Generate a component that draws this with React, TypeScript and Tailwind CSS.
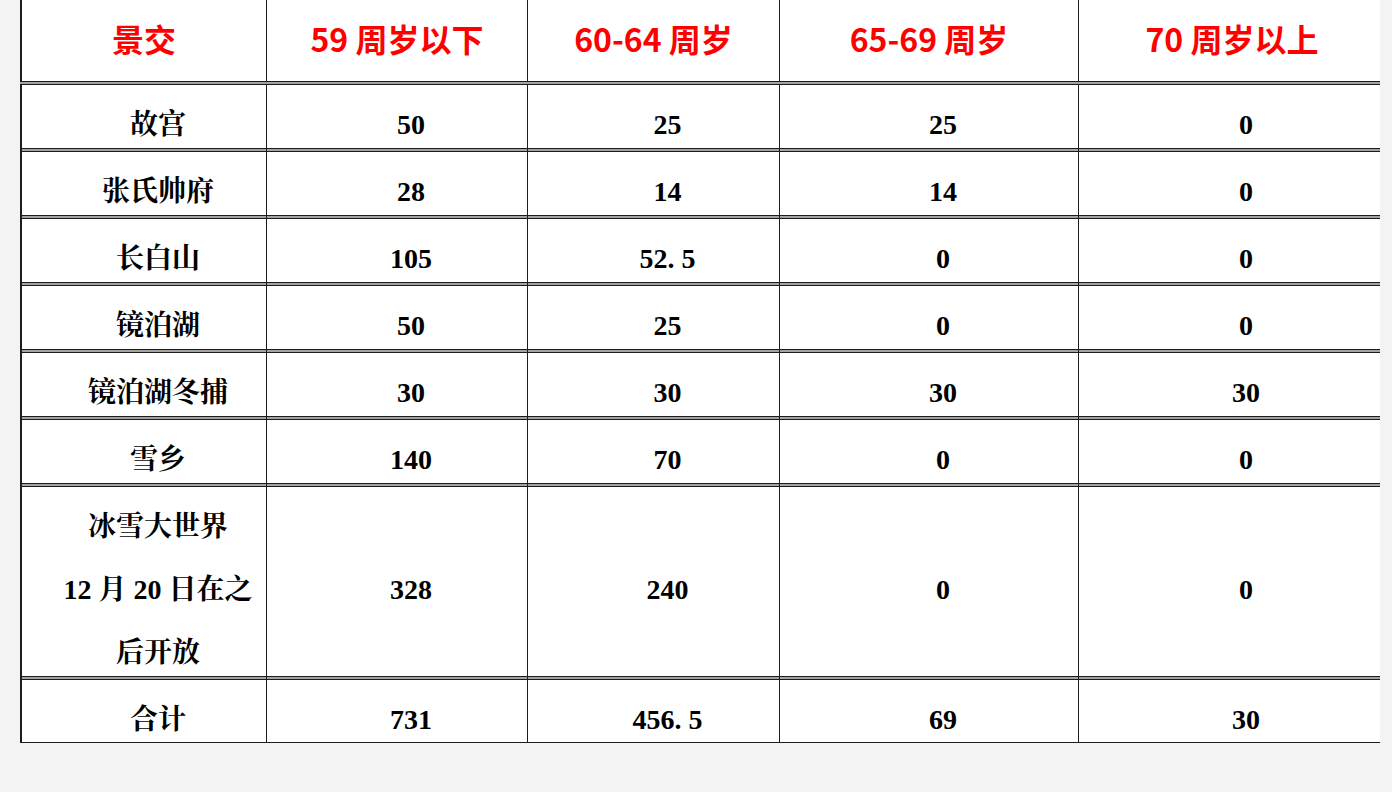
const header = ["景交", "59 周岁以下", "60-64 周岁", "65-69 周岁", "70 周岁以上"];

const rows: { name: string[]; values: string[]; tall?: boolean; last?: boolean }[] = [
  { name: ["故宫"], values: ["50", "25", "25", "0"] },
  { name: ["张氏帅府"], values: ["28", "14", "14", "0"] },
  { name: ["长白山"], values: ["105", "52. 5", "0", "0"] },
  { name: ["镜泊湖"], values: ["50", "25", "0", "0"] },
  { name: ["镜泊湖冬捕"], values: ["30", "30", "30", "30"] },
  { name: ["雪乡"], values: ["140", "70", "0", "0"] },
  { name: ["冰雪大世界", "12 月 20 日在之", "后开放"], values: ["328", "240", "0", "0"], tall: true },
  { name: ["合计"], values: ["731", "456. 5", "69", "30"], last: true },
];

const cols = "grid grid-cols-[246px_261px_252px_299px_307px]";
const serif = "font-['Liberation_Serif','Noto_Serif_CJK_SC','Noto_Sans_CJK_SC',serif]";

const Separator = () => (
  <div className="h-[4px] border-y border-[#1c1c1c] bg-[#a3a3a3]" />
);

const Cell = ({ children, first }: { children: React.ReactNode; first?: boolean }) => (
  <div
    className={`flex flex-col items-center justify-center ${
      first ? "border-l-2" : "border-l"
    } border-[#1c1c1c] pl-[28px] pt-[8px]`}
  >
    {children}
  </div>
);

export default function App() {
  return (
    <div className="min-h-screen bg-[#f3f3f3]">
      <div className="ml-[20px] w-[1360px] overflow-hidden bg-white">
        <div className="w-[1365px]">
          {/* Header */}
          <div className={`${cols} h-[81px]`}>
            {header.map((h, i) => (
              <div
                key={i}
                className={`flex items-center justify-center pb-[6px] ${
                  i === 0 ? "border-l-2" : "border-l"
                } border-[#1c1c1c] font-['Noto_Sans_CJK_SC',sans-serif] text-[32px] font-bold text-[#ff0000]`}
              >
                {h}
              </div>
            ))}
          </div>

          {rows.map((r, i) => (
            <div key={i}>
              <Separator />
              <div
                className={`${cols} ${r.tall ? "h-[189px]" : r.last ? "h-[62px]" : "h-[63px]"} ${serif} text-[28px] font-bold text-black`}
              >
                <Cell first>
                  {r.name.map((line, j) => (
                    <div key={j} className="leading-[63px] whitespace-nowrap">
                      {line}
                    </div>
                  ))}
                </Cell>
                {r.values.map((v, j) => (
                  <Cell key={j}>
                    <div className="leading-none whitespace-nowrap">{v}</div>
                  </Cell>
                ))}
              </div>
            </div>
          ))}
          <div className="h-[1px] bg-[#1c1c1c]" />
        </div>
      </div>
    </div>
  );
}
